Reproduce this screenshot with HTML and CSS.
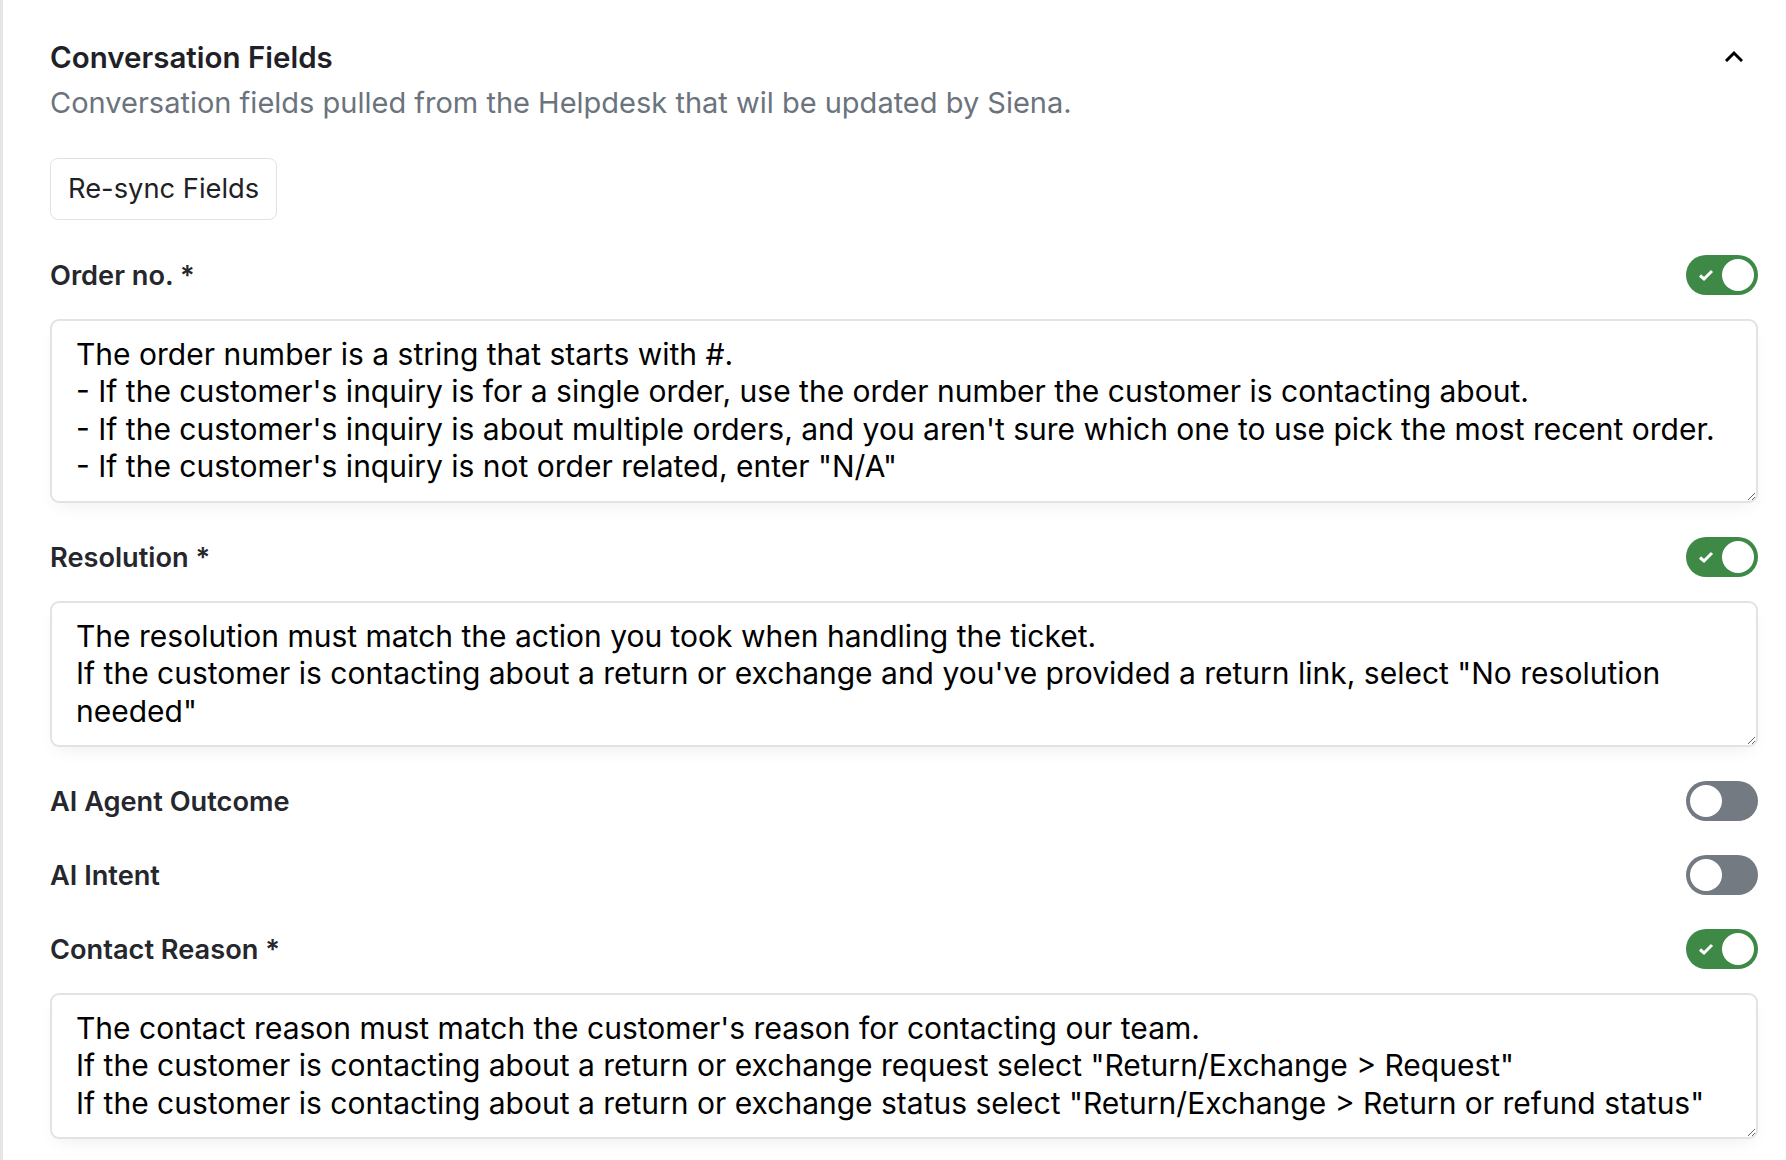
FILE: index.html
```html
<!DOCTYPE html>
<html lang="en">
<head>
<meta charset="utf-8">
<title>Conversation Fields</title>
<link rel="stylesheet" href="styles.css">
</head>
<body>
<section class="panel">
  <header class="section-head">
    <div class="head-text">
      <h2 class="title">Conversation Fields</h2>
      <p class="subtitle">Conversation fields pulled from the Helpdesk that wil be updated by Siena.</p>
    </div>
    <button class="collapse" type="button" aria-label="Collapse">
      <svg width="18" height="12" viewBox="0 0 18 12"><polyline points="2,10 9,3 16,10" fill="none" stroke="#000" stroke-width="3" stroke-linecap="square"/></svg>
    </button>
  </header>

  <button class="btn" type="button">Re-sync Fields</button>

  <div class="fields">
    <div class="field">
      <div class="field-head">
        <label class="label">Order no. *</label>
        <span class="toggle on"><svg class="check" width="16" height="14" viewBox="0 0 16 14"><polyline points="2,7.5 6,11 14,3" fill="none" stroke="#fff" stroke-width="3"/></svg><span class="knob"></span></span>
      </div>
      <textarea class="input rows-4">The order number is a string that starts with #.
- If the customer's inquiry is for a single order, use the order number the customer is contacting about.
- If the customer's inquiry is about multiple orders, and you aren't sure which one to use pick the most recent order.
- If the customer's inquiry is not order related, enter "N/A"</textarea>
    </div>

    <div class="field">
      <div class="field-head">
        <label class="label">Resolution *</label>
        <span class="toggle on"><svg class="check" width="16" height="14" viewBox="0 0 16 14"><polyline points="2,7.5 6,11 14,3" fill="none" stroke="#fff" stroke-width="3"/></svg><span class="knob"></span></span>
      </div>
      <textarea class="input rows-3">The resolution must match the action you took when handling the ticket.
If the customer is contacting about a return or exchange and you've provided a return link, select "No resolution needed"</textarea>
    </div>

    <div class="field">
      <div class="field-head">
        <label class="label">AI Agent Outcome</label>
        <span class="toggle off"><span class="knob"></span></span>
      </div>
    </div>

    <div class="field">
      <div class="field-head">
        <label class="label">AI Intent</label>
        <span class="toggle off"><span class="knob"></span></span>
      </div>
    </div>

    <div class="field">
      <div class="field-head">
        <label class="label">Contact Reason *</label>
        <span class="toggle on"><svg class="check" width="16" height="14" viewBox="0 0 16 14"><polyline points="2,7.5 6,11 14,3" fill="none" stroke="#fff" stroke-width="3"/></svg><span class="knob"></span></span>
      </div>
      <textarea class="input rows-3">The contact reason must match the customer's reason for contacting our team.
If the customer is contacting about a return or exchange request select "Return/Exchange > Request"
If the customer is contacting about a return or exchange status select "Return/Exchange > Return or refund status"</textarea>
    </div>
  </div>
</section>
</body>
</html>
```

FILE: styles.css
```css
* { box-sizing: border-box; }
html, body { margin: 0; padding: 0; background: #fff; }
body {
  font-family: Inter, "Noto Sans", "Liberation Sans", sans-serif;
  color: #24262b;
  height: 1160px;
  overflow: hidden;
}
.panel {
  border-left: 3px solid #e6e6e6;
  padding: 39px 28px 0 47px;
  min-height: 1160px;
}
.section-head {
  display: flex;
  justify-content: space-between;
  align-items: flex-start;
}
.title {
  margin: 0;
  font-size: 29.5px;
  line-height: 36px;
  font-weight: 600;
  color: #1f2126;
}
.subtitle {
  margin: 9px 0 0;
  font-size: 29px;
  line-height: 38px;
  font-weight: 400;
  color: #6b737d;
}
.collapse {
  background: none;
  border: 0;
  padding: 0;
  width: 48px;
  height: 32px;
  display: flex;
  align-items: center;
  justify-content: center;
  margin-top: 1px;
}
.btn {
  display: block;
  margin-top: 36px;
  font-family: inherit;
  font-size: 27.3px;
  line-height: 36px;
  padding: 12px 17px;
  color: #1f2126;
  background: #fff;
  border: 1.5px solid #e2e2e2;
  border-radius: 8px;
}
.fields {
  margin-top: 35px;
  display: flex;
  flex-direction: column;
  gap: 34px;
}
.field {
  display: flex;
  flex-direction: column;
  gap: 24px;
}
.field-head {
  display: flex;
  justify-content: space-between;
  align-items: center;
  height: 40px;
}
.label {
  font-size: 27.2px;
  font-weight: 600;
  color: #25272d;
}
.toggle {
  position: relative;
  width: 72px;
  height: 40px;
  border-radius: 20px;
  flex: none;
}
.toggle.on { background: #3e8945; }
.toggle.off { background: #737a82; }
.knob {
  position: absolute;
  top: 4px;
  width: 32px;
  height: 32px;
  border-radius: 50%;
  background: #fff;
}
.toggle.on .knob { right: 4px; }
.toggle.off .knob { left: 4px; }
.check {
  position: absolute;
  left: 12px;
  top: 13px;
}
.input {
  display: block;
  width: 100%;
  font-family: Inter, "Noto Sans", "Liberation Sans", sans-serif;
  font-size: 30px;
  line-height: 37.4px;
  color: #000;
  padding: 15px 24px 13px;
  border: 2px solid #e3e3e3;
  border-radius: 9px;
  background: #fff;
  resize: vertical;
  overflow: hidden;
  box-shadow: 0 8px 18px -6px rgba(0, 0, 0, 0.07);
}
.input:focus { outline: none; }
.rows-4 { height: 184px; }
.rows-3 { height: 146px; }
```
